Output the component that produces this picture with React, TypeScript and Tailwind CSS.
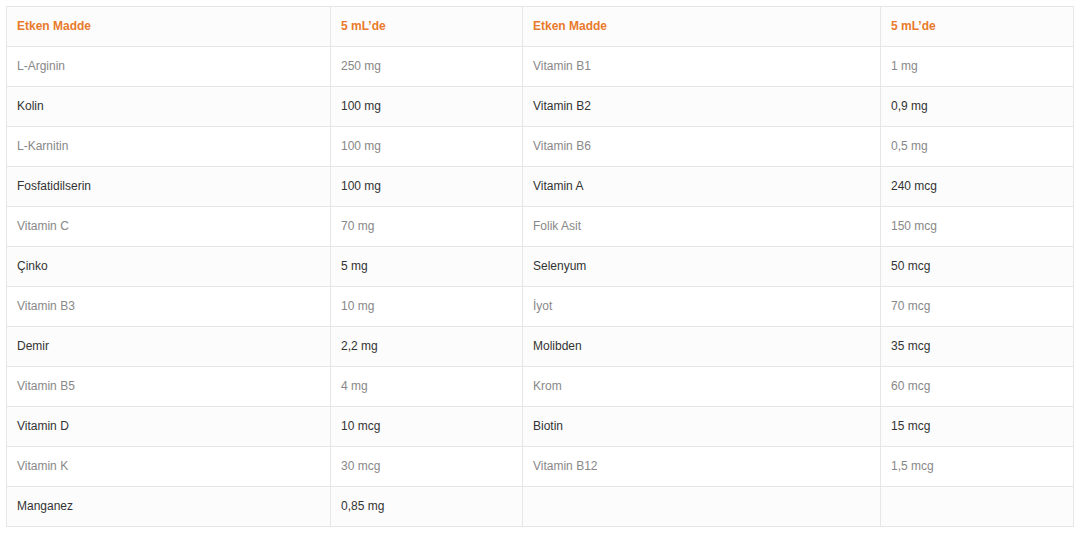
const left: [string, string][] = [
  ["L-Arginin", "250 mg"],
  ["Kolin", "100 mg"],
  ["L-Karnitin", "100 mg"],
  ["Fosfatidilserin", "100 mg"],
  ["Vitamin C", "70 mg"],
  ["Çinko", "5 mg"],
  ["Vitamin B3", "10 mg"],
  ["Demir", "2,2 mg"],
  ["Vitamin B5", "4 mg"],
  ["Vitamin D", "10 mcg"],
  ["Vitamin K", "30 mcg"],
  ["Manganez", "0,85 mg"],
];

const right: [string, string][] = [
  ["Vitamin B1", "1 mg"],
  ["Vitamin B2", "0,9 mg"],
  ["Vitamin B6", "0,5 mg"],
  ["Vitamin A", "240 mcg"],
  ["Folik Asit", "150 mcg"],
  ["Selenyum", "50 mcg"],
  ["İyot", "70 mcg"],
  ["Molibden", "35 mcg"],
  ["Krom", "60 mcg"],
  ["Biotin", "15 mcg"],
  ["Vitamin B12", "1,5 mcg"],
  ["", ""],
];

export default function App() {
  const cell = "border border-[#e6e6e6] h-10 px-[10px] pb-[2px] align-middle";

  return (
    <div className="bg-white min-h-[535px] pt-[6px] pl-[6px] font-['Liberation_Sans',Arial,sans-serif] text-[12px]">
      <table className="border-collapse table-fixed w-[1067px]">
        <colgroup>
          <col className="w-[324px]" />
          <col className="w-[192px]" />
          <col className="w-[358px]" />
          <col className="w-[193px]" />
        </colgroup>
        <thead>
          <tr className="bg-[#fcfcfc] text-[#e97a2c] font-bold text-left">
            <th className={cell}>Etken Madde</th>
            <th className={cell}>5 mL’de</th>
            <th className={cell}>Etken Madde</th>
            <th className={cell}>5 mL’de</th>
          </tr>
        </thead>
        <tbody>
          {left.map((row, i) => {
            const odd = i % 2 === 0;
            return (
              <tr
                key={i}
                className={odd ? "bg-white text-[#888888]" : "bg-[#fcfcfc] text-[#333333]"}
              >
                <td className={cell}>{row[0]}</td>
                <td className={cell}>{row[1]}</td>
                <td className={cell}>{right[i][0]}</td>
                <td className={cell}>{right[i][1]}</td>
              </tr>
            );
          })}
        </tbody>
      </table>
    </div>
  );
}
